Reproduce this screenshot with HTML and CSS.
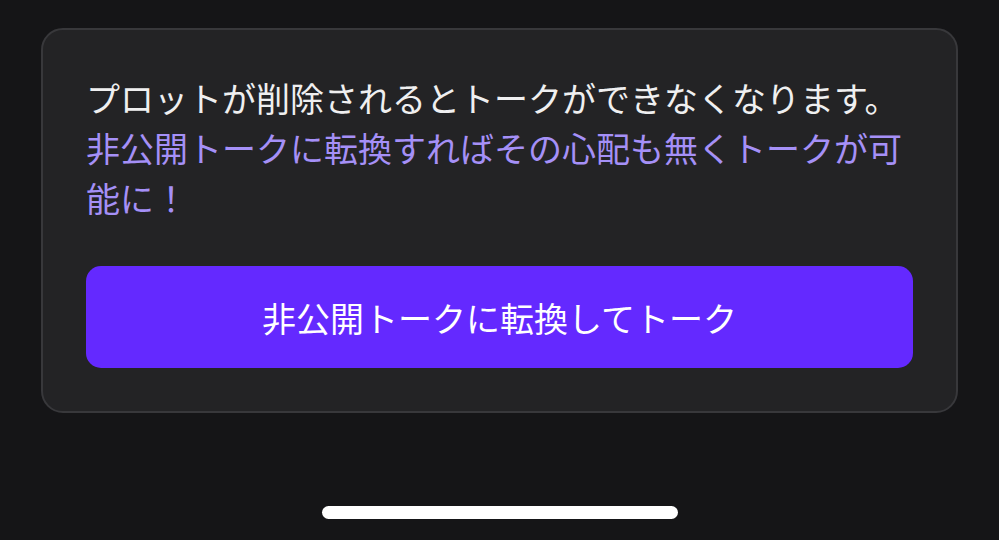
FILE: index.html
```html
<!DOCTYPE html>
<html lang="ja">
<head>
    <meta charset="UTF-8">
    <meta name="viewport" content="width=device-width, initial-scale=1.0">
    <title>トーク</title>
    <link rel="stylesheet" href="styles.css">
</head>
<body>
    <div class="screen">
        <div class="card">
            <p class="notice">
                <span class="warn">プロットが削除されるとトークができなくなります。</span><span class="hint">非公開トークに転換すればその心配も無くトークが可能に！</span>
            </p>
            <button class="convert-btn">非公開トークに転換してトーク</button>
        </div>

        <div class="home-bar"></div>
    </div>
</body>
</html>
```

FILE: styles.css
```css
body {
    margin: 0;
    padding: 0;
    background: #151517;
    font-family: 'Noto Sans CJK JP', 'Noto Sans', sans-serif;
}
.screen {
    display: flex;
    flex-direction: column;
    height: 540px;
}
.card {
    margin: 28px 41px 0;
    padding: 43px;
    background: #232325;
    border: 2px solid #38383b;
    border-radius: 22px;
}
.notice {
    margin: 0 0 43px;
    font-size: 34px;
    line-height: 50px;
}
.warn {
    display: block;
    color: #efeff0;
}
.hint {
    color: #a590f7;
}
.convert-btn {
    display: block;
    width: 100%;
    height: 102px;
    border: none;
    border-radius: 15px;
    background: #6429ff;
    color: #ffffff;
    font-family: inherit;
    font-size: 34px;
    cursor: pointer;
}
.home-bar {
    width: 356px;
    height: 13px;
    margin: auto auto 21px;
    background: #ffffff;
    border-radius: 7px;
}
```
